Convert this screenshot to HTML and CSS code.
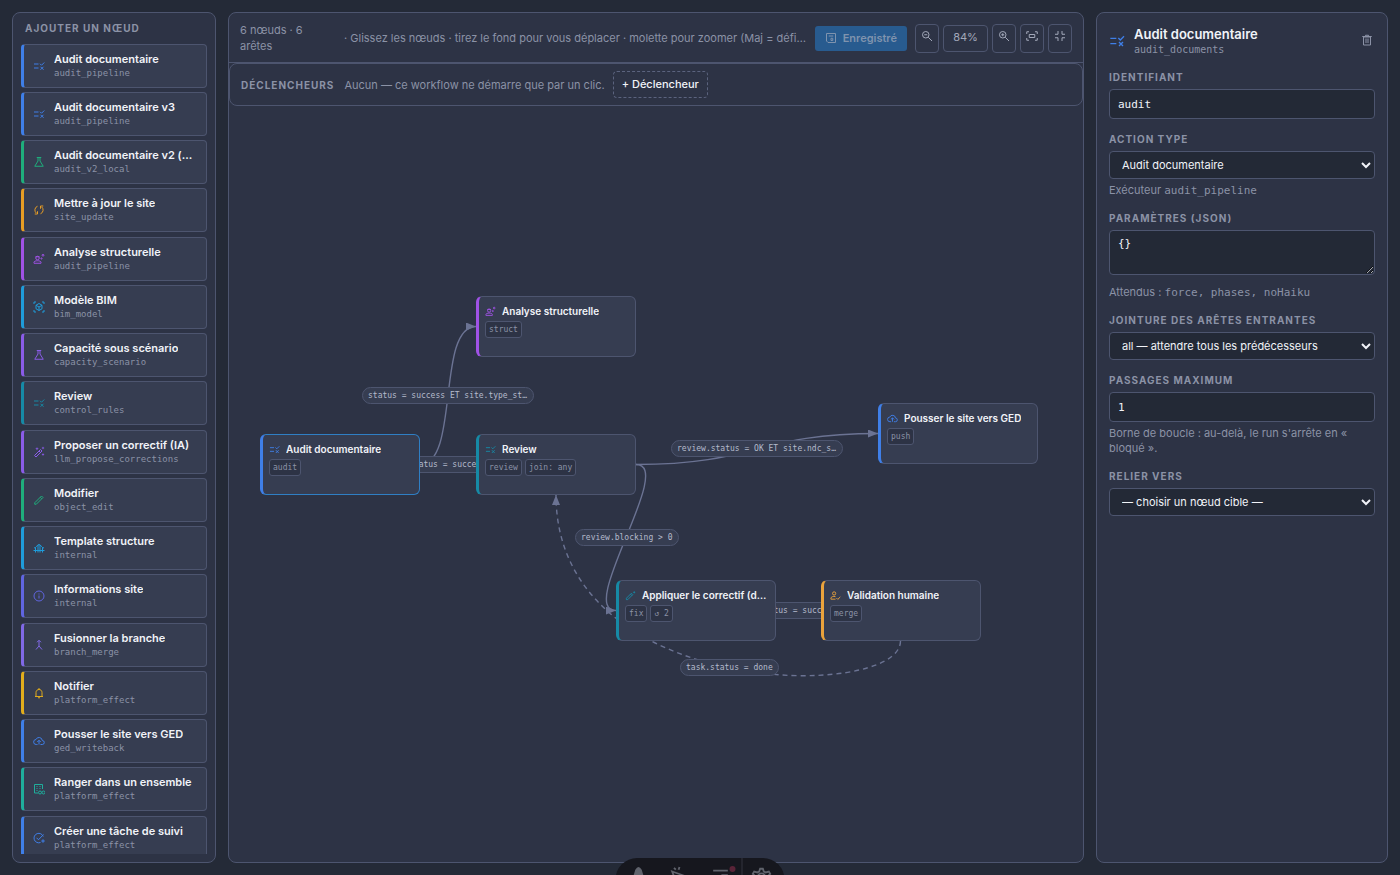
FILE: index.html
```html
<!DOCTYPE html>
<html lang="fr">
<head>
<meta charset="utf-8">
<title>Éditeur de workflow</title>
<link rel="stylesheet" href="styles.css">
</head>
<body>
<svg class="sprite" aria-hidden="true">
  <symbol id="i-rule" viewBox="0 0 24 24"><path d="M2 8h9M2 16h9M14 7.500l3 3 5.500-5.500M15 13.500l6 6m0-6l-6 6"/></symbol>
  <symbol id="i-flask" viewBox="0 0 24 24"><path d="M7.500 3h9M10 3v7L3.500 20.500h17L14 10V3"/></symbol>
  <symbol id="i-sync" viewBox="0 0 24 24"><path d="M9 4.500A8 8 0 0 0 6.500 18M9 14.500V20H3.500M15 19.500A8 8 0 0 0 17.500 6M15 9.500V4h5.500"/></symbol>
  <symbol id="i-engineer" viewBox="0 0 24 24"><circle cx="9" cy="10" r="3.500"/><path d="M2 20.500v-2c0-4 14-4 14 0v2zM5 7.500h8"/><circle cx="20" cy="4.500" r="1.800"/><circle cx="17" cy="11" r="1.200"/></symbol>
  <symbol id="i-bim" viewBox="0 0 24 24"><path d="M2 6V2h4M18 2h4v4M22 18v4h-4M6 22H2v-4M12 5l6 3.500v7L12 19l-6-3.500v-7zM6 8.500l6 3.500 6-3.500M12 12v7"/></symbol>
  <symbol id="i-wand" viewBox="0 0 24 24"><path d="M3 19L15 7l3 3L6 22zM12 10l3 3"/><path class="solid" d="M8 2l1 2.500L11.500 5.500 9 6.500 8 9 7 6.500 4.500 5.500 7 4.500zM20 1l1 2 2 1-2 1-1 2-1-2-2-1 2-1zM20 14l1 2 2 1-2 1-1 2-1-2-2-1 2-1z"/></symbol>
  <symbol id="i-pencil" viewBox="0 0 24 24"><path d="M3.500 17.500L17 4l3 3L6.500 20.500H3.500zM14.500 6.500l3 3"/></symbol>
  <symbol id="i-fix" viewBox="0 0 24 24"><path d="M3 18L14 7l3 3L6 21H3zM12 9l3 3"/><path class="solid" d="M20 2l1 2 2 1-2 1-1 2-1-2-2-1 2-1z"/></symbol>
  <symbol id="i-bridge" viewBox="0 0 24 24"><path d="M2 12c5 0 6-7 10-7s5 7 10 7M1 17h22M5 11v10M10 6v15M14 6v15M19 11v10"/></symbol>
  <symbol id="i-info" viewBox="0 0 24 24"><circle cx="12" cy="12" r="10"/><path d="M12 11v6M12 7v2"/></symbol>
  <symbol id="i-merge" viewBox="0 0 24 24"><path d="M6 21l6-7V3M12 14l6 7M8 6.500L12 2.500l4 4"/></symbol>
  <symbol id="i-bell" viewBox="0 0 24 24"><path d="M4 19h16M6 19v-8c0-8 12-8 12 0v8M12 2v3M10 21.500h4"/></symbol>
  <symbol id="i-cloud" viewBox="0 0 24 24"><path d="M9 19H6.500a5 5 0 0 1-.5-10 6.500 6.500 0 0 1 12.500 2A4 4 0 0 1 18.500 19H15M12 19v-8M8.500 14L12 10.500l3.500 3.500"/></symbol>
  <symbol id="i-group" viewBox="0 0 24 24"><path d="M10 20H3V3h16v9M7 7h2M13 7h2M7 11h2M13 11h2M7 15h2"/><circle cx="14" cy="19" r="3"/><circle cx="21" cy="19" r="3"/></symbol>
  <symbol id="i-task" viewBox="0 0 24 24"><path d="M20.500 9A9.500 9.500 0 1 0 15 21M7 11.500l4 4L21 5M20 14.500v7M16.500 18h7"/></symbol>
  <symbol id="i-human" viewBox="0 0 24 24"><circle cx="9" cy="7.500" r="3.500"/><path d="M12 20H2v-2c0-3 5-5 10-3.500M14 17.500l3 3 5.500-5.500"/></symbol>
  <symbol id="i-trash" viewBox="0 0 24 24"><path d="M5 6h14v16H5zM2.500 5h19M9 5V2.500h6V5M10 9v9M14 9v9"/></symbol>
  <symbol id="i-save" viewBox="0 0 24 24"><path d="M3 3h18v18H6l-3-3zM7.500 8h9"/><path d="M12 12.500h3.500V17H12z"/></symbol>
  <symbol id="i-zoomout" viewBox="0 0 24 24"><circle cx="9.500" cy="9.500" r="6.500"/><path d="M14.500 14.500L22 22M6.500 9.500h6"/></symbol>
  <symbol id="i-zoomin" viewBox="0 0 24 24"><circle cx="9.500" cy="9.500" r="6.500"/><path d="M14.500 14.500L22 22M6.500 9.500h6M9.500 6.500v6"/></symbol>
  <symbol id="i-fit" viewBox="0 0 24 24"><path d="M1.500 8V3.500H6M18 3.500h4.500V8M22.500 16v4.500H18M6 20.500H1.500V16M6.500 9h11v6h-11z"/></symbol>
  <symbol id="i-collapse" viewBox="0 0 24 24"><path d="M2 8.500h6V2M16 2v6.500h6M22 15.500h-6V22M8 22v-6.500H2"/></symbol>
  <symbol id="i-gear" viewBox="0 0 24 24"><path d="M9.500 6l1-3h3l1 3 2 1 3.500-1 1.500 2.500-2.500 2.500v4l2.500 2.500-1.500 2.500-3.500-1-2 1-1 3.500h-3l-1-3.500-2-1-3.500 1L2.500 17.500 5 15v-4L2.500 8.500 4 6l3.500 1z"/><circle cx="12" cy="12" r="4"/></symbol>
  <symbol id="i-pointer" viewBox="0 0 24 24"><path d="M4 6l17 6-7 3-4 7zM6 2l2 2M12 1l-1 3"/></symbol>
</svg>

<div class="app">
  <aside class="panel palette">
    <h2 class="caption palette-title">Ajouter un nœud</h2>
    <div class="palette-list">
      <div class="group">
        <button class="item c-blue"><svg class="icon"><use href="#i-rule"/></svg><span class="item-text"><span class="item-name">Audit documentaire</span><code class="item-code">audit_pipeline</code></span></button>
        <button class="item c-blue"><svg class="icon"><use href="#i-rule"/></svg><span class="item-text"><span class="item-name">Audit documentaire v3</span><code class="item-code">audit_pipeline</code></span></button>
        <button class="item c-green"><svg class="icon"><use href="#i-flask"/></svg><span class="item-text"><span class="item-name">Audit documentaire v2 (local)</span><code class="item-code">audit_v2_local</code></span></button>
        <button class="item c-amber"><svg class="icon"><use href="#i-sync"/></svg><span class="item-text"><span class="item-name">Mettre à jour le site</span><code class="item-code">site_update</code></span></button>
      </div>
      <div class="group">
        <button class="item c-purple"><svg class="icon"><use href="#i-engineer"/></svg><span class="item-text"><span class="item-name">Analyse structurelle</span><code class="item-code">audit_pipeline</code></span></button>
        <button class="item c-sky"><svg class="icon"><use href="#i-bim"/></svg><span class="item-text"><span class="item-name">Modèle BIM</span><code class="item-code">bim_model</code></span></button>
        <button class="item c-violet"><svg class="icon"><use href="#i-flask"/></svg><span class="item-text"><span class="item-name">Capacité sous scénario</span><code class="item-code">capacity_scenario</code></span></button>
        <button class="item c-cyan"><svg class="icon"><use href="#i-rule"/></svg><span class="item-text"><span class="item-name">Review</span><code class="item-code">control_rules</code></span></button>
      </div>
      <div class="group">
        <button class="item c-violet"><svg class="icon"><use href="#i-wand"/></svg><span class="item-text"><span class="item-name">Proposer un correctif (IA)</span><code class="item-code">llm_propose_corrections</code></span></button>
        <button class="item c-green"><svg class="icon"><use href="#i-pencil"/></svg><span class="item-text"><span class="item-name">Modifier</span><code class="item-code">object_edit</code></span></button>
        <button class="item c-sky"><svg class="icon"><use href="#i-bridge"/></svg><span class="item-text"><span class="item-name">Template structure</span><code class="item-code">internal</code></span></button>
        <button class="item c-indigo"><svg class="icon"><use href="#i-info"/></svg><span class="item-text"><span class="item-name">Informations site</span><code class="item-code">internal</code></span></button>
      </div>
      <div class="group">
        <button class="item c-lilac"><svg class="icon"><use href="#i-merge"/></svg><span class="item-text"><span class="item-name">Fusionner la branche</span><code class="item-code">branch_merge</code></span></button>
        <button class="item c-yellow"><svg class="icon"><use href="#i-bell"/></svg><span class="item-text"><span class="item-name">Notifier</span><code class="item-code">platform_effect</code></span></button>
        <button class="item c-blue"><svg class="icon"><use href="#i-cloud"/></svg><span class="item-text"><span class="item-name">Pousser le site vers GED</span><code class="item-code">ged_writeback</code></span></button>
        <button class="item c-teal"><svg class="icon"><use href="#i-group"/></svg><span class="item-text"><span class="item-name">Ranger dans un ensemble</span><code class="item-code">platform_effect</code></span></button>
      </div>
      <div class="group">
        <button class="item c-blue"><svg class="icon"><use href="#i-task"/></svg><span class="item-text"><span class="item-name">Créer une tâche de suivi</span><code class="item-code">platform_effect</code></span></button>
      </div>
    </div>
  </aside>

  <main class="panel editor">
    <header class="toolbar">
      <span class="count">6 nœuds · 6 arêtes</span>
      <span class="hint">· Glissez les nœuds · tirez le fond pour vous déplacer · molette pour zoomer (Maj = défilement)</span>
      <button class="save" disabled><svg class="icon"><use href="#i-save"/></svg>Enregistré</button>
      <div class="zoom">
        <button class="tool" aria-label="Dézoomer"><svg class="icon"><use href="#i-zoomout"/></svg></button>
        <button class="tool level">84%</button>
        <button class="tool" aria-label="Zoomer"><svg class="icon"><use href="#i-zoomin"/></svg></button>
        <button class="tool" aria-label="Ajuster"><svg class="icon"><use href="#i-fit"/></svg></button>
        <button class="tool" aria-label="Réduire"><svg class="icon"><use href="#i-collapse"/></svg></button>
      </div>
    </header>
    <section class="triggers">
      <h2 class="caption">Déclencheurs</h2>
      <span class="triggers-text">Aucun — ce workflow ne démarre que par un clic.</span>
      <button class="add-trigger">+ Déclencheur</button>
    </section>
    <div class="canvas">
      <svg class="edges" aria-hidden="true">
        <defs>
          <marker id="arrow" viewBox="0 0 10 8" refX="10" refY="4" markerWidth="10" markerHeight="8" markerUnits="userSpaceOnUse" orient="auto"><path class="arrow" d="M0 0L10 4L0 8z"/></marker>
        </defs>
        <g transform="translate(-229 -106)">
          <path class="edge" d="M420 464.500H476"/>
          <path class="edge" d="M420 464.500C460 464.500 436 326.500 476 326.500"/>
          <path class="edge" d="M636 464.500C757 464.500 757 433.500 878 433.500"/>
          <path class="edge" d="M636 464.500C676 464.500 576 610.500 616 610.500"/>
          <path class="edge" d="M776 610.500H821"/>
          <path class="edge dashed" d="M900.500 641C900.500 701 556 701 556 495"/>
        </g>
      </svg>
      <span class="edge-label l-struct">status = success ET site.type_st…</span>
      <span class="edge-label l-review">status = success</span>
      <span class="edge-label l-push">review.status = OK ET site.ndc_s…</span>
      <span class="edge-label l-fix">review.blocking &gt; 0</span>
      <span class="edge-label l-merge">status = success</span>
      <span class="edge-label l-loop">task.status = done</span>

      <article class="node n-struct c-purple"><h3 class="node-title"><svg class="icon"><use href="#i-engineer"/></svg><span>Analyse structurelle</span></h3><div class="chips"><code class="chip">struct</code></div></article>
      <article class="node n-audit c-blue selected"><h3 class="node-title"><svg class="icon"><use href="#i-rule"/></svg><span>Audit documentaire</span></h3><div class="chips"><code class="chip">audit</code></div></article>
      <article class="node n-review c-cyan"><h3 class="node-title"><svg class="icon"><use href="#i-rule"/></svg><span>Review</span></h3><div class="chips"><code class="chip">review</code><code class="chip">join: any</code></div></article>
      <article class="node n-push c-blue"><h3 class="node-title"><svg class="icon"><use href="#i-cloud"/></svg><span>Pousser le site vers GED</span></h3><div class="chips"><code class="chip">push</code></div></article>
      <article class="node n-fix c-cyan"><h3 class="node-title"><svg class="icon"><use href="#i-fix"/></svg><span>Appliquer le correctif (déterministe)</span></h3><div class="chips"><code class="chip">fix</code><code class="chip">↺ 2</code></div></article>
      <article class="node n-merge c-orange"><h3 class="node-title"><svg class="icon"><use href="#i-human"/></svg><span>Validation humaine</span></h3><div class="chips"><code class="chip">merge</code></div></article>
    </div>
  </main>

  <aside class="panel inspector">
    <header class="inspector-head c-blue">
      <svg class="icon"><use href="#i-rule"/></svg>
      <div class="inspector-titles"><h1 class="inspector-title">Audit documentaire</h1><code class="inspector-code">audit_documents</code></div>
      <button class="delete" aria-label="Supprimer"><svg class="icon"><use href="#i-trash"/></svg></button>
    </header>
    <div class="field">
      <label class="caption" for="f-id">Identifiant</label>
      <input class="control mono" id="f-id" type="text" value="audit">
    </div>
    <div class="field">
      <label class="caption" for="f-type">Action type</label>
      <select class="control" id="f-type"><option>Audit documentaire</option></select>
      <p class="help">Exécuteur <code>audit_pipeline</code></p>
    </div>
    <div class="field">
      <label class="caption" for="f-params">Paramètres (JSON)</label>
      <textarea class="control mono" id="f-params" spellcheck="false">{}</textarea>
      <p class="help after-area">Attendus : <code>force, phases, noHaiku</code></p>
    </div>
    <div class="field">
      <label class="caption" for="f-join">Jointure des arêtes entrantes</label>
      <select class="control" id="f-join"><option>all — attendre tous les prédécesseurs</option></select>
    </div>
    <div class="field">
      <label class="caption" for="f-max">Passages maximum</label>
      <input class="control mono" id="f-max" type="text" inputmode="numeric" value="1">
      <p class="help">Borne de boucle : au-delà, le run s'arrête en « bloqué ».</p>
    </div>
    <div class="field">
      <label class="caption" for="f-link">Relier vers</label>
      <select class="control" id="f-link"><option>— choisir un nœud cible —</option></select>
    </div>
  </aside>
</div>

<nav class="dock" aria-label="Outils">
  <div class="dock-main">
    <svg class="dock-icon" viewBox="0 0 24 24"><path class="solid" d="M8.500 4q3.500-6 7 0l6 20h-5l-2.500-9h-4L7.500 24h-5z"/></svg>
    <svg class="dock-icon"><use href="#i-pointer"/></svg>
    <span class="dock-list"><svg class="dock-icon" viewBox="0 0 24 24"><path d="M4 5h16M13 10h7"/></svg><i class="dot"></i></span>
  </div>
  <svg class="dock-icon"><use href="#i-gear"/></svg>
</nav>
</body>
</html>
```
FILE: styles.css
```css
:root {
  --bg: #242a37;
  --panel: #2d3345;
  --card: #363d51;
  --line: #4d556f;
  --text: #f1f3f8;
  --muted: #8b92a6;
  --sans: Inter, "Liberation Sans", sans-serif;
  --monospace: "DejaVu Sans Mono", "Liberation Mono", monospace;
}

* { box-sizing: border-box; }

body {
  margin: 0;
  overflow: hidden;
  background: var(--bg);
  color: var(--text);
  font-family: var(--sans);
  font-size: 11px;
  line-height: 16px;
}

h1, h2, h3, p { margin: 0; }
code { font-family: var(--monospace); }
button { font-family: inherit; color: inherit; cursor: pointer; }

.sprite { display: none; }

.icon {
  flex: none;
  width: 12px;
  height: 12px;
}
.icon, .dock-icon {
  fill: none;
  stroke: currentColor;
  stroke-width: 2;
}
.solid { fill: currentColor; stroke: none; }

.c-blue { --accent: #3f7fe8; }
.c-green { --accent: #1fae7c; }
.c-amber { --accent: #e79d24; }
.c-orange { --accent: #eba33c; }
.c-purple { --accent: #a052e6; }
.c-sky { --accent: #1f9cda; }
.c-violet { --accent: #8a5ce8; }
.c-cyan { --accent: #168aa6; }
.c-indigo { --accent: #6065e0; }
.c-lilac { --accent: #8069e6; }
.c-yellow { --accent: #e2ad1c; }
.c-teal { --accent: #1fae9c; }

.app {
  display: grid;
  grid-template-columns: 204px minmax(0, 1fr) 292px;
  gap: 12px;
  height: 100vh;
  padding: 12px;
}

.panel {
  min-height: 0;
  background: var(--panel);
  border: 1px solid var(--line);
  border-radius: 8px;
}

.caption {
  color: var(--muted);
  font-size: 10px;
  font-weight: 700;
  line-height: 16px;
  letter-spacing: 1px;
  text-transform: uppercase;
}

/* Palette */
.palette {
  display: flex;
  flex-direction: column;
  padding: 7px 8px 8px;
}
.palette-title { padding: 0 4px 8px; }
.palette-list {
  display: flex;
  flex-direction: column;
  gap: 5px;
  min-height: 0;
  overflow: hidden;
}
.group {
  display: flex;
  flex: none;
  flex-direction: column;
  gap: 4px;
}
.item {
  display: flex;
  align-items: center;
  gap: 9px;
  padding: 7px 12px 7px 9px;
  background: var(--card);
  border: 1px solid var(--line);
  border-left: 3px solid var(--accent);
  border-radius: 4px;
  text-align: left;
}
.item .icon, .node .icon, .inspector-head > .icon { color: var(--accent); }
.item-text {
  display: flex;
  flex-direction: column;
  min-width: 0;
}
.item-name {
  overflow: hidden;
  font-size: 11px;
  font-weight: 600;
  line-height: 15px;
  text-overflow: ellipsis;
  white-space: nowrap;
}
.item-code {
  color: var(--muted);
  font-size: 9px;
  line-height: 13px;
}

/* Editor */
.editor {
  display: flex;
  flex-direction: column;
  overflow: hidden;
}
.toolbar {
  display: flex;
  align-items: center;
  gap: 8px;
  padding: 9px 11px 8px;
  border-bottom: 1px solid var(--line);
  color: var(--muted);
}
.count {
  flex: none;
  width: 96px;
  padding-right: 24px;
}
.hint {
  flex: 1;
  overflow: hidden;
  text-overflow: ellipsis;
  white-space: nowrap;
}
.save {
  display: flex;
  align-items: center;
  gap: 6px;
  height: 25px;
  padding: 0 10px;
  background: #285b8f;
  border: 0;
  border-radius: 3px;
  color: #7f93ae;
  font-size: 11px;
  font-weight: 600;
}
.zoom {
  display: flex;
  align-items: center;
  gap: 4px;
}
.tool {
  display: grid;
  place-items: center;
  width: 24px;
  height: 29px;
  padding: 0 0 5px;
  background: none;
  border: 1px solid var(--line);
  border-radius: 4px;
  color: #a3a9ba;
}
.level {
  width: 45px;
  height: 27px;
  padding: 0 0 2px;
  font-size: 11px;
}
.triggers {
  display: flex;
  align-items: center;
  gap: 8px;
  padding: 7px 11px;
  border: 1px solid var(--line);
  border-radius: 8px;
}
.triggers-text {
  padding-left: 2px;
  color: var(--muted);
}
.add-trigger {
  padding: 4px 8px;
  background: none;
  border: 1px dashed #5b637e;
  border-radius: 4px;
  font-size: 11px;
  font-weight: 500;
  line-height: 17px;
}

.canvas {
  position: relative;
  flex: 1;
  min-height: 0;
  overflow: hidden;
}
.edges {
  position: absolute;
  inset: 0;
  width: 100%;
  height: 100%;
}
.edge {
  fill: none;
  stroke: #6b7393;
  stroke-width: 1.4;
  marker-end: url(#arrow);
}
.dashed { stroke-dasharray: 5 4; }
.arrow { fill: #6b7393; }

.edge-label {
  position: absolute;
  padding: 0 5px;
  background: var(--card);
  border: 1px solid var(--line);
  border-radius: 9px;
  color: #b4bacb;
  font-family: var(--monospace);
  font-size: 8px;
  line-height: 15px;
  white-space: nowrap;
}
.l-struct, .l-push { width: 172px; }
.l-struct { left: 133px; top: 281px; }
.l-review { left: 174px; top: 350px; }
.l-push { left: 442px; top: 334px; }
.l-fix { left: 346px; top: 423px; }
.l-merge { left: 524px; top: 496px; }
.l-loop { left: 451px; top: 553px; }

.node {
  position: absolute;
  width: 160px;
  height: 61px;
  padding: 6px 4px 6px 6px;
  background: var(--card);
  border: 1px solid var(--line);
  border-left: 3px solid var(--accent);
  border-radius: 6px;
}
.selected {
  border-color: #2f7fc4;
  border-left-color: var(--accent);
}
.n-struct { left: 247px; top: 190px; }
.n-audit { left: 31px; top: 328px; }
.n-review { left: 247px; top: 328px; }
.n-push { left: 649px; top: 297px; }
.n-fix { left: 387px; top: 474px; }
.n-merge { left: 592px; top: 474px; }
.node-title {
  display: flex;
  align-items: center;
  gap: 6px;
  font-size: 10px;
  font-weight: 600;
  line-height: 16px;
}
.node-title span {
  overflow: hidden;
  text-overflow: ellipsis;
  white-space: nowrap;
}
.node .icon {
  width: 11px;
  height: 11px;
}
.chips {
  display: flex;
  gap: 3px;
  padding-top: 2px;
}
.chip {
  padding: 0 3px;
  background: var(--panel);
  border: 1px solid var(--line);
  border-radius: 3px;
  color: var(--muted);
  font-size: 8px;
  line-height: 15px;
}

/* Inspector */
.inspector {
  display: flex;
  flex-direction: column;
  gap: 12px;
  padding: 12px;
}
.inspector-head {
  display: flex;
  align-items: center;
  gap: 9px;
}
.inspector-head .icon {
  width: 16px;
  height: 16px;
}
.inspector-titles {
  display: flex;
  flex: 1;
  flex-direction: column;
}
.inspector-title {
  font-size: 13px;
  font-weight: 600;
  line-height: 18px;
}
.inspector-code {
  color: var(--muted);
  font-size: 10px;
  line-height: 14px;
}
.delete {
  display: grid;
  place-items: center;
  padding: 0 2px 3px 0;
  background: none;
  border: 0;
  color: var(--muted);
}
.delete .icon { width: 12px; height: 12px; }
.field {
  display: flex;
  flex-direction: column;
}
.field .caption { padding-bottom: 4px; }
.control {
  width: 100%;
  height: 28px;
  padding: 0 8px;
  background: #232936;
  border: 1px solid var(--line);
  border-radius: 4px;
  color: var(--text);
  font-family: var(--sans);
  font-size: 11px;
  line-height: 16px;
}
input.control { height: 30px; }
.mono { font-family: var(--monospace); }
textarea.control {
  height: 45px;
  padding: 5px 8px;
  resize: vertical;
}
.help {
  padding-top: 4px;
  color: var(--muted);
  font-size: 11px;
  line-height: 15px;
}
.after-area { padding-top: 10px; }

/* Floating dock, mostly below the fold */
.dock {
  position: fixed;
  bottom: -26px;
  left: 50%;
  display: flex;
  gap: 8px;
  height: 43px;
  padding: 0 12px;
  transform: translateX(-50%);
  background: #16171e;
  border-radius: 22px;
  color: #60636c;
}
.dock-main {
  display: flex;
  gap: 19px;
  padding-right: 10px;
  border-right: 1px solid #33353f;
}
.dock-icon {
  display: block;
  width: 22px;
  height: 22px;
  margin-top: 8px;
}
.dock-list { position: relative; }
.dot {
  position: absolute;
  top: 8px;
  right: -4px;
  width: 6px;
  height: 6px;
  background: #5a2438;
  border-radius: 50%;
}
```
